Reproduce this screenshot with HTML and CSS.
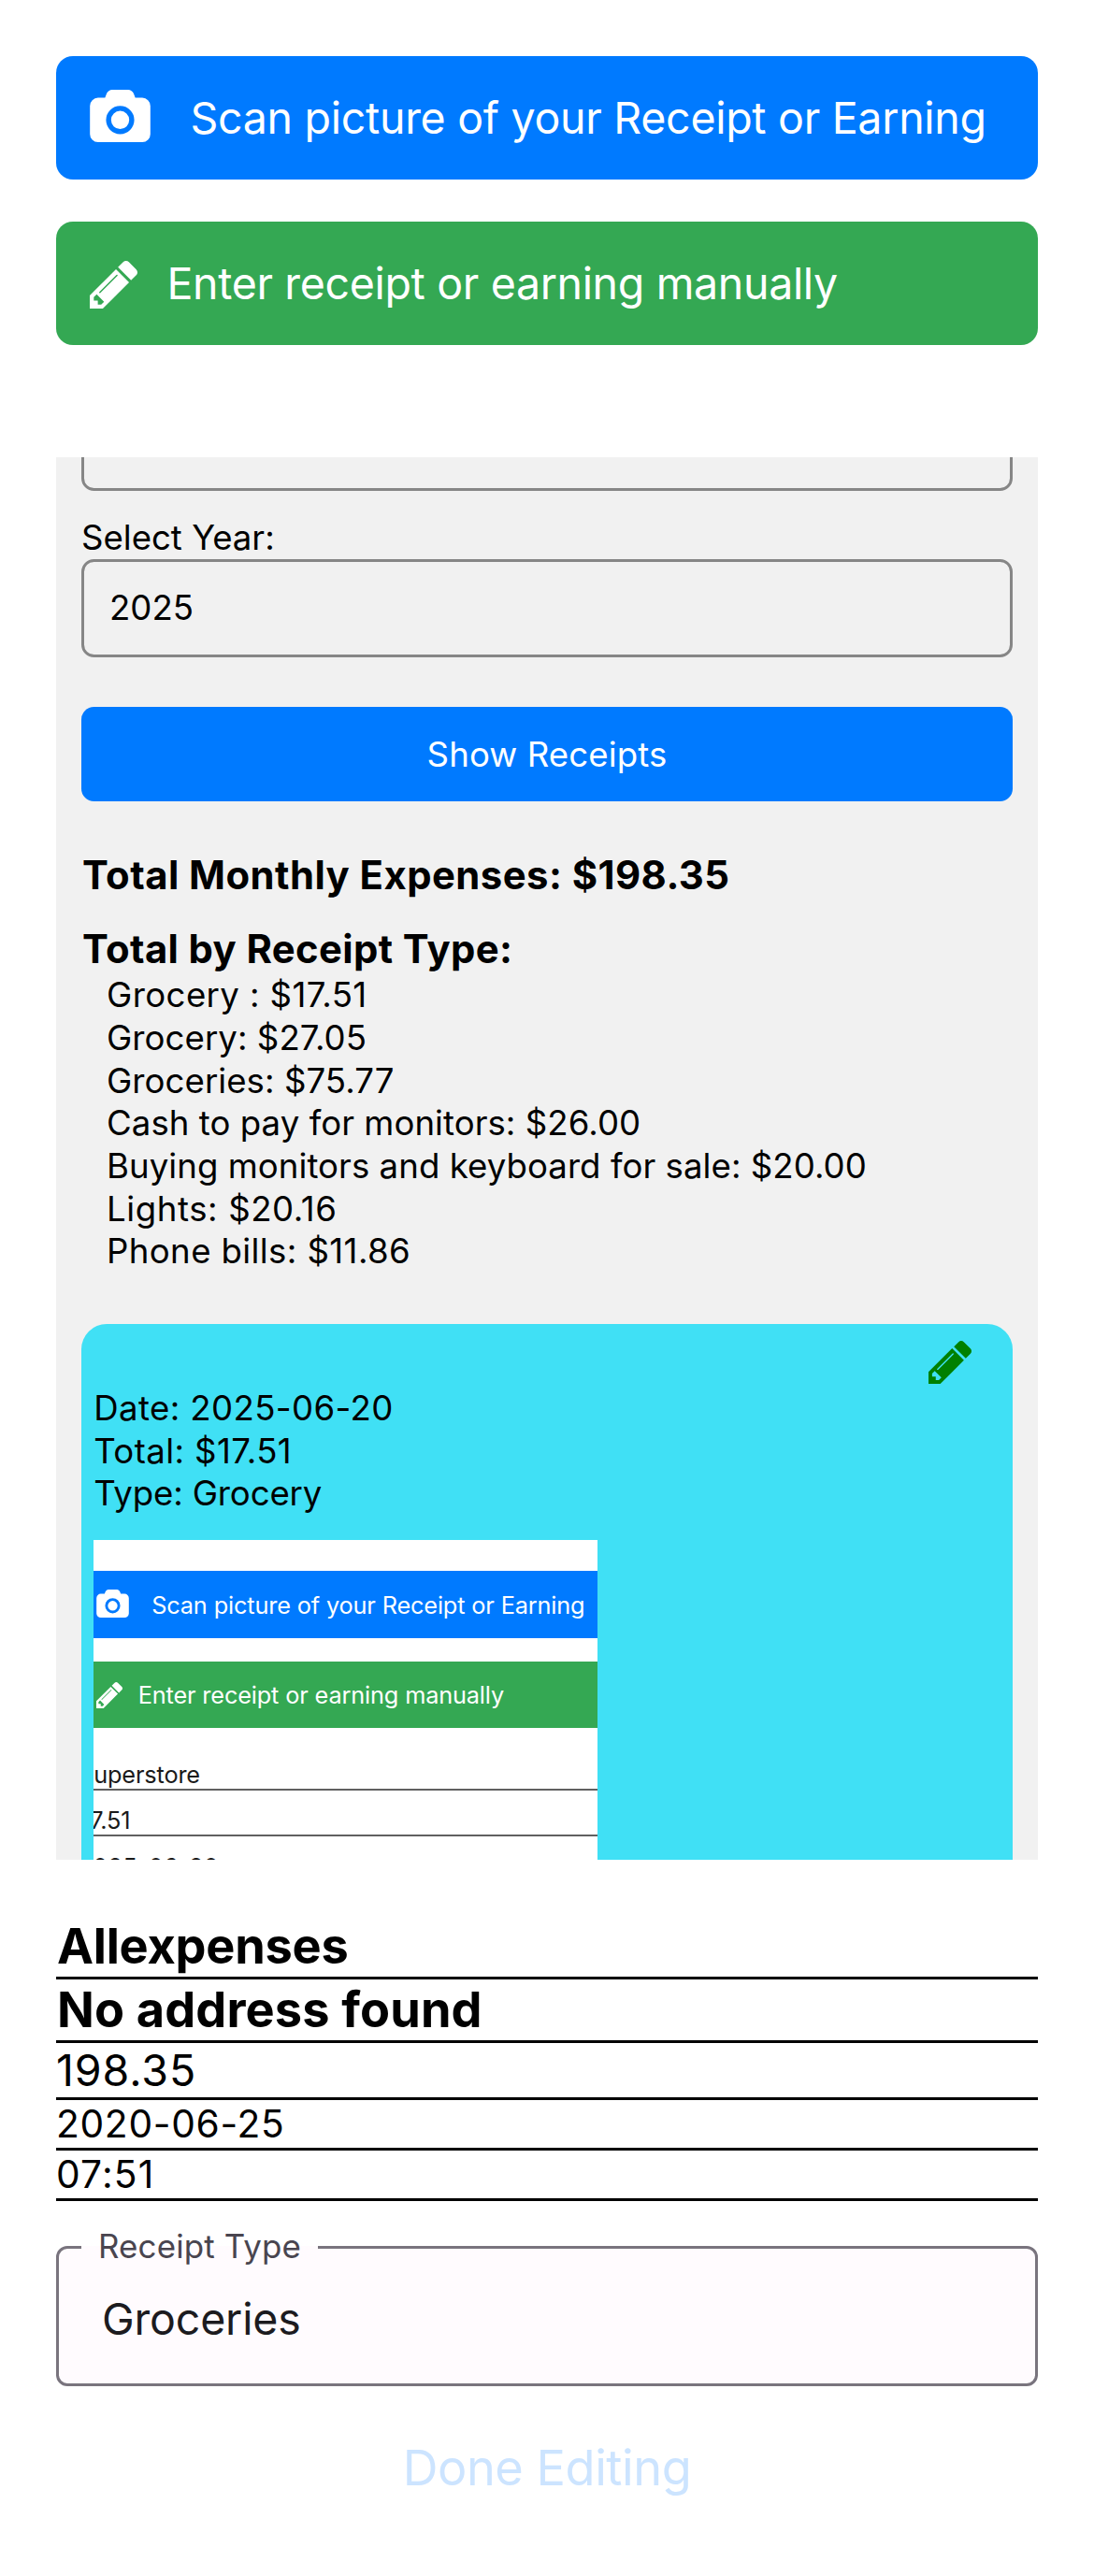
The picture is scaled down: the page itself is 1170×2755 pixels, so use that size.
FILE: index.html
```html
<!DOCTYPE html>
<html lang="en">
<head>
<meta charset="utf-8">
<title>Receipts</title>
<link rel="stylesheet" href="styles.css">
</head>
<body>
<svg class="sprite" aria-hidden="true">
  <symbol id="camera" viewBox="0 0 1920 1664"><path d="M960 672q119 0 203.500 84.500t84.500 203.500-84.500 203.500-203.500 84.500-203.500-84.500-84.500-203.500 84.500-203.500 203.500-84.500zM1664 256q106 0 181 75t75 181v896q0 106-75 181t-181 75h-1408q-106 0-181-75t-75-181v-896q0-106 75-181t181-75h224l51-136q19-49 69.500-84.500t103.500-35.500h512q53 0 103.500 35.500t69.500 84.500l51 136h224zM960 1408q185 0 316.500-131.500t131.500-316.500-131.500-316.500-316.500-131.500-316.500 131.500-131.500 316.500 131.500 316.500 316.500 131.500z"/></symbol>
  <symbol id="pencil" viewBox="0 149 1515 1515"><path fill-rule="evenodd" d="M363 1536l91-91-235-235-91 91v107h128v128h107zM886 608q0-22-22-22-10 0-17 7l-542 542q-7 7-7 17 0 22 22 22 10 0 17-7l542-542q7-7 7-17zM832 416l416 416-832 832h-416v-416zM1515 512q0 53-37 90l-166 166-416-416 166-165q36-38 90-38 53 0 91 38l235 234q37 39 37 91z"/></symbol>
</svg>

<main class="page">
  <button class="action action-scan">
    <svg class="icon-camera"><use href="#camera"/></svg>
    <span class="scan-text">Scan picture of your Receipt or Earning</span>
  </button>
  <button class="action action-manual">
    <svg class="icon-pencil"><use href="#pencil"/></svg>
    <span class="manual-text">Enter receipt or earning manually</span>
  </button>

  <section class="panel">
    <div class="select select-month"></div>
    <div class="label">Select Year:</div>
    <div class="select">2025</div>
    <button class="show">Show Receipts</button>
    <h2 class="total">Total Monthly Expenses: $198.35</h2>
    <h2 class="by-type">Total by Receipt Type:</h2>
    <ul class="types">
      <li class="wide">Grocery : $17.51</li>
      <li>Grocery: $27.05</li>
      <li>Groceries: $75.77</li>
      <li>Cash to pay for monitors: $26.00</li>
      <li>Buying monitors and keyboard for sale: $20.00</li>
      <li class="wider">Lights: $20.16</li>
      <li class="wide">Phone bills: $11.86</li>
    </ul>

    <article class="card">
      <svg class="card-edit"><use href="#pencil"/></svg>
      <div class="wide">Date: 2025-06-20</div>
      <div class="wide">Total: $17.51</div>
      <div class="type">Type: Grocery</div>
      <div class="thumb">
        <div class="bar bar-scan">
          <svg class="bar-camera"><use href="#camera"/></svg>
          <span>Scan picture of your Receipt or Earning</span>
        </div>
        <div class="bar bar-manual">
          <svg class="bar-pencil"><use href="#pencil"/></svg>
          <span>Enter receipt or earning manually</span>
        </div>
        <div class="rows">
          <div class="row"><span>uperstore</span></div>
          <div class="row row-total"><span>7.51</span></div>
          <div class="row row-date"><span>025-06-20</span></div>
        </div>
      </div>
    </article>
  </section>

  <section class="details">
    <div class="line line-name">Allexpenses</div>
    <div class="line line-address">No address found</div>
    <div class="line line-amount">198.35</div>
    <div class="line line-date">2020-06-25</div>
    <div class="line line-time">07:51</div>
  </section>

  <div class="field">
    <span class="field-label">Receipt Type</span>
    <span class="field-value">Groceries</span>
  </div>
  <button class="done">Done Editing</button>
</main>
</body>
</html>
```
FILE: styles.css
```css
* { box-sizing: border-box; }

body {
  margin: 0;
  background: #fff;
  color: #000;
  font-family: Inter, "Liberation Sans", sans-serif;
}

button {
  display: block;
  margin: 0;
  padding: 0;
  border: 0;
  background: none;
  font: inherit;
  text-align: left;
}

svg { display: block; flex: none; fill: currentColor; }
.sprite { position: absolute; width: 0; height: 0; }

.page { height: 2755px; padding: 60px 60px 0; overflow: hidden; }

/* Main actions */
.action {
  display: flex;
  align-items: center;
  width: 100%;
  height: 132px;
  padding: 0 36px;
  border-radius: 18px;
  color: #fff;
  font-size: 46.5px;
  white-space: nowrap;
}
.action-scan { margin-bottom: 45px; gap: 42.5px; background: #007aff; }
.action-manual { gap: 31.5px; background: #34a853; }
.icon-camera { width: 65px; height: 56px; margin-top: -4px; }
.icon-pencil { width: 51px; height: 51px; margin-top: 3px; }
.scan-text { letter-spacing: -0.285px; }
.manual-text { letter-spacing: -0.337px; }

/* Monthly overview */
.panel {
  height: 1500px;
  margin-top: 120px;
  padding: 0 27px;
  overflow: hidden;
  background: #f1f1f1;
  font-size: 36.6px;
  line-height: 45.7px;
}
.select {
  display: flex;
  align-items: center;
  height: 105px;
  padding: 2px 0 0 27px;
  border: 3px solid #868686;
  border-radius: 13.5px;
}
.select-month { margin: -68.700px 0 27.700px; }
.label { margin-bottom: -1px; }
.show {
  width: 100%;
  height: 100.500px;
  margin-top: 53.500px;
  padding-top: 2px;
  border-radius: 13.5px;
  background: #007aff;
  color: #fff;
  text-align: center;
  letter-spacing: 0.116px;
}
.total, .by-type {
  margin: 0;
  padding-left: 1px;
  font-size: 41.8px;
  font-weight: 700;
  line-height: 52px;
}
.total { margin: 53.500px 0 27px; letter-spacing: 0.463px; }
.by-type { letter-spacing: 0.389px; }
.types { margin: 0; padding: 1px 0 0 27px; list-style: none; letter-spacing: 0.06px; }
.wide { letter-spacing: 0.4px; }
.wider { letter-spacing: 0.6px; }
.type { letter-spacing: -0.15px; }

/* Receipt card */
.card {
  position: relative;
  height: 900px;
  margin-top: 53.500px;
  padding: 68.300px 13.200px 0;
  border-radius: 27px;
  background: #40e0f5;
}
.card-edit {
  position: absolute;
  top: 18px;
  right: 44px;
  width: 46px;
  height: 46px;
  color: #008000;
}

/* Photo of the receipt form */
.thumb {
  width: 539px;
  height: 800px;
  margin-top: 26px;
  padding-top: 33px;
  overflow: hidden;
  background: #fff;
  font-size: 25.3px;
  line-height: 30px;
}
.bar {
  display: flex;
  align-items: center;
  height: 71.700px;
  padding-left: 3px;
  color: #fff;
  letter-spacing: -0.15px;
}
.bar span { padding-top: 1.5px; }
.bar-scan { gap: 24px; margin-bottom: 25px; background: #007aff; }
.bar-manual { gap: 16.5px; background: #34a853; }
.bar-camera { width: 35px; height: 30px; margin-top: -1px; }
.bar-pencil { width: 28px; height: 28px; margin-top: 1px; }
.rows { padding-top: 17px; color: #1a1a1a; }
.row {
  display: flex;
  align-items: flex-end;
  height: 49.300px;
  border-bottom: 2px solid #606060;
}
.row span { letter-spacing: -0.15px; }
.row.row-total span { margin-left: -4px; }
.row.row-date span { margin: 0 0 -1px -1px; letter-spacing: 0.3px; }

/* Extracted details */
.details { padding-top: 60px; }
.line { border-bottom: 3px solid #000; }
.line-name, .line-address { font-size: 52.3px; font-weight: 700; line-height: 65px; }
.line-name { padding-left: 1px; letter-spacing: -0.255px; }
.line-address { padding-left: 1px; letter-spacing: 0.132px; }
.line-amount { font-size: 46.5px; line-height: 58px; letter-spacing: 0.932px; }
.line-date, .line-time { font-size: 40.7px; line-height: 51px; }
.line-date { letter-spacing: 0.696px; }
.line-time { letter-spacing: 1.2px; }

/* Outlined text field */
.field {
  position: relative;
  display: flex;
  align-items: center;
  height: 150px;
  margin-top: 48px;
  padding: 6px 0 0 46px;
  border: 3px solid #79747e;
  border-radius: 12px;
  background: #fffbfe;
}
.field-value { color: #1c1b1f; font-size: 46.5px; letter-spacing: -0.173px; }
.field-label {
  position: absolute;
  top: -25px;
  left: 24px;
  width: 253px;
  background: linear-gradient(#fff 22px, #fffbfe 22px);
  color: #49454f;
  font-size: 34.9px;
  line-height: 44px;
  letter-spacing: 0.144px;
  text-align: center;
}

.done {
  margin: 54px auto 0;
  color: #cce4ff;
  font-size: 52.3px;
  line-height: 66px;
  letter-spacing: -0.454px;
}
```
